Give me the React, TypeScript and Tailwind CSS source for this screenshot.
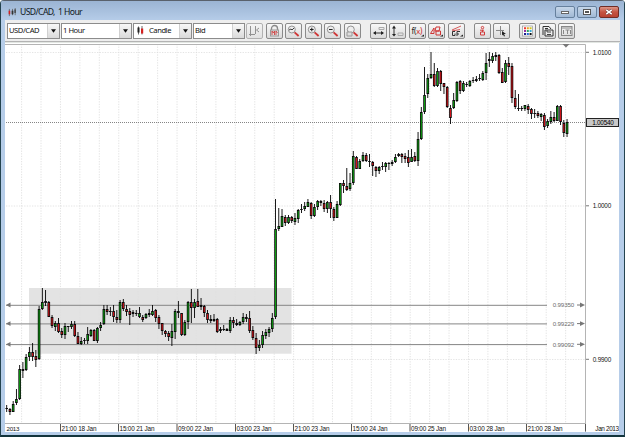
import type { ReactNode } from "react";

type Tone = "g" | "r" | "k";
type Candle = [high: number, low: number, top: number, bottom: number, tone: Tone];

const candles: Candle[] = [
  [405, 412, 408, 409, "k"], [408, 415, 409, 412, "r"], [401, 412, 404, 412, "g"], [389, 405, 399, 403, "g"],
  [365, 400, 369, 399, "g"], [362, 378, 369, 371, "k"], [354, 371, 357, 370, "g"], [347, 361, 352, 357, "g"],
  [343, 361, 352, 357, "r"], [350, 367, 356, 360, "r"], [306, 360, 309, 359, "g"], [288, 310, 302, 309, "g"],
  [290, 306, 301, 303, "r"], [301, 317, 302, 317, "r"], [315, 328, 317, 326, "r"], [321, 331, 323, 327, "g"],
  [318, 333, 323, 332, "r"], [328, 338, 331, 335, "r"], [323, 339, 326, 335, "g"], [326, 332, 326, 327, "g"],
  [321, 329, 324, 327, "g"], [321, 337, 324, 336, "r"], [332, 344, 336, 344, "r"], [337, 345, 341, 344, "g"],
  [338, 344, 340, 341, "k"], [327, 344, 334, 341, "g"], [329, 337, 330, 336, "g"], [329, 341, 330, 341, "r"],
  [327, 343, 328, 341, "g"], [322, 331, 325, 328, "g"], [305, 325, 309, 324, "g"], [305, 315, 309, 312, "r"],
  [307, 316, 311, 312, "k"], [305, 322, 311, 317, "r"], [310, 323, 317, 320, "r"], [300, 323, 302, 320, "g"],
  [299, 311, 302, 309, "r"], [305, 316, 309, 312, "r"], [308, 325, 311, 315, "r"], [310, 317, 312, 314, "g"],
  [310, 316, 313, 314, "k"], [307, 318, 313, 317, "g"], [315, 322, 317, 320, "r"], [313, 319, 314, 318, "g"],
  [309, 317, 313, 315, "g"], [305, 316, 311, 315, "g"], [309, 322, 310, 318, "r"], [315, 329, 317, 324, "r"],
  [323, 335, 323, 331, "r"], [330, 337, 331, 334, "r"], [331, 341, 333, 337, "r"], [324, 346, 331, 338, "g"],
  [309, 339, 311, 332, "g"], [301, 318, 311, 313, "r"], [313, 336, 313, 335, "r"], [320, 336, 322, 335, "g"],
  [301, 329, 302, 322, "g"], [289, 323, 302, 308, "r"], [299, 318, 302, 308, "g"], [289, 307, 301, 307, "r"],
  [298, 310, 305, 307, "r"], [305, 317, 306, 313, "r"], [310, 323, 313, 320, "r"], [315, 323, 319, 321, "g"],
  [314, 322, 319, 321, "g"], [318, 333, 319, 332, "r"], [327, 333, 329, 331, "g"], [325, 331, 329, 330, "k"],
  [328, 331, 329, 331, "r"], [317, 333, 320, 331, "g"], [317, 328, 320, 323, "r"], [319, 326, 323, 325, "r"],
  [321, 326, 322, 325, "g"], [313, 324, 317, 322, "g"], [314, 322, 317, 319, "r"], [311, 333, 318, 331, "r"],
  [326, 340, 330, 338, "r"], [333, 354, 338, 348, "r"], [340, 351, 345, 348, "g"], [331, 348, 335, 345, "g"],
  [329, 339, 332, 336, "g"], [327, 337, 329, 333, "g"], [313, 332, 318, 329, "g"], [199, 319, 229, 317, "g"],
  [208, 231, 226, 229, "g"], [209, 227, 216, 227, "g"], [215, 226, 217, 223, "r"], [215, 224, 217, 223, "g"],
  [216, 223, 217, 221, "r"], [213, 225, 218, 222, "g"], [209, 223, 210, 219, "g"], [204, 213, 209, 210, "g"],
  [202, 211, 206, 209, "g"], [199, 207, 202, 207, "g"], [202, 219, 203, 216, "r"], [204, 217, 207, 216, "g"],
  [200, 210, 201, 207, "g"], [200, 206, 201, 203, "r"], [200, 212, 203, 209, "r"], [201, 213, 202, 209, "g"],
  [195, 218, 202, 209, "r"], [207, 221, 209, 218, "r"], [201, 218, 204, 218, "g"], [183, 206, 183, 205, "g"],
  [180, 193, 183, 186, "r"], [168, 191, 186, 190, "r"], [173, 191, 183, 189, "g"], [151, 185, 156, 183, "g"],
  [156, 169, 157, 169, "r"], [159, 169, 161, 169, "g"], [152, 162, 155, 161, "g"], [153, 162, 155, 161, "r"],
  [154, 167, 161, 162, "r"], [161, 176, 162, 166, "r"], [166, 177, 167, 171, "r"], [166, 174, 167, 171, "g"],
  [162, 170, 166, 167, "k"], [162, 172, 163, 167, "g"], [162, 170, 163, 164, "k"], [160, 166, 162, 164, "g"],
  [154, 163, 157, 162, "g"], [153, 157, 154, 156, "g"], [153, 163, 154, 157, "r"], [153, 163, 156, 159, "r"],
  [150, 167, 157, 163, "r"], [149, 162, 157, 162, "g"], [152, 162, 156, 161, "r"], [132, 166, 139, 161, "g"],
  [107, 140, 112, 139, "g"], [67, 114, 95, 112, "g"], [74, 98, 78, 94, "g"], [52, 79, 74, 78, "g"],
  [63, 87, 74, 86, "r"], [68, 87, 71, 86, "g"], [70, 91, 71, 84, "r"], [83, 94, 83, 87, "r"],
  [86, 108, 87, 107, "r"], [105, 124, 108, 118, "r"], [93, 109, 100, 108, "g"], [81, 102, 82, 101, "g"],
  [80, 94, 81, 91, "r"], [81, 92, 83, 91, "g"], [82, 87, 84, 85, "k"], [80, 87, 81, 86, "g"],
  [77, 83, 80, 81, "g"], [76, 82, 79, 81, "g"], [74, 81, 78, 79, "k"], [71, 81, 73, 80, "g"],
  [53, 80, 63, 73, "g"], [52, 67, 59, 61, "g"], [53, 63, 56, 61, "g"], [52, 61, 55, 57, "g"],
  [54, 74, 55, 73, "r"], [68, 83, 72, 83, "r"], [60, 83, 63, 82, "g"], [57, 75, 63, 67, "r"],
  [63, 103, 66, 98, "r"], [90, 109, 98, 107, "r"], [94, 111, 108, 109, "k"], [106, 111, 108, 109, "k"],
  [105, 111, 105, 109, "g"], [104, 114, 106, 110, "r"], [108, 119, 109, 114, "r"], [109, 118, 113, 114, "k"],
  [111, 118, 113, 116, "r"], [113, 121, 114, 117, "g"], [113, 130, 115, 127, "r"], [119, 128, 121, 126, "g"],
  [111, 124, 117, 122, "g"], [112, 122, 117, 121, "r"], [105, 121, 106, 121, "g"], [105, 125, 106, 122, "r"],
  [120, 137, 123, 133, "r"], [119, 137, 122, 134, "g"],
];

const CHART_X = 5;
const CHART_Y = 43;
const FIRST_X = 6.7;
const STEP = 3.239;

const gridLines = Array.from({ length: 29 }, (_, i) => 21.6 + i * 19.43);

const timeLabels = [
  { x: 60.5, text: "21:00 18 Jan" },
  { x: 118.5, text: "15:00 21 Jan" },
  { x: 177, text: "09:00 22 Jan" },
  { x: 235.5, text: "03:00 23 Jan" },
  { x: 293.5, text: "21:00 23 Jan" },
  { x: 351.5, text: "15:00 24 Jan" },
  { x: 410, text: "09:00 25 Jan" },
  { x: 468.5, text: "03:00 28 Jan" },
  { x: 526.5, text: "21:00 28 Jan" },
];

const levels = [
  { y: 305, value: "0.99350" },
  { y: 323.6, value: "0.99229" },
  { y: 344.3, value: "0.99092" },
];

const prices = [
  { y: 52, value: "1.0100" },
  { y: 205.5, value: "1.0000" },
  { y: 359, value: "0.9900" },
];

function CandleIcon({ className }: { className?: string }) {
  return (
    <svg viewBox="0 0 9 10" className={className}>
      <path d="M1 1v8M4.5 1v7M7.5 0v8" stroke="#555" strokeWidth="0.8" />
      <rect x="0.2" y="3" width="1.8" height="4" fill="#d42020" />
      <rect x="3.5" y="3" width="2" height="4" fill="#333" />
      <rect x="6.6" y="1.5" width="1.6" height="4" fill="#444" />
    </svg>
  );
}

function CandleTypeIcon() {
  return (
    <svg viewBox="0 0 7 9" className="ml-[3px] mr-[4px] h-[9px] w-[7px]">
      <path d="M1.5 0.5v8M5 0v8.5" stroke="#444" strokeWidth="0.8" />
      <rect x="0.5" y="1.5" width="2" height="5" fill="#222" />
      <rect x="4" y="2.5" width="2.2" height="5" fill="#d42020" />
    </svg>
  );
}

function Select({ label, className, icon }: { label: string; className: string; icon?: ReactNode }) {
  return (
    <div className={`flex h-[16px] shrink-0 items-center border border-[#8c8c8c] bg-white ${className}`}>
      {icon}
      <span className="flex-1 whitespace-nowrap pl-[1px] text-[7.6px] leading-none tracking-[-0.45px] text-[#111]">{label}</span>
      <span className="flex h-full w-[12px] items-center justify-center border-l border-[#d0d0d0] bg-gradient-to-b from-[#f8f8f8] to-[#dadada]">
        <svg viewBox="0 0 6 4" className="h-[4px] w-[5px]">
          <path d="M0 0h6L3 4z" fill="#111" />
        </svg>
      </span>
    </div>
  );
}

function ToolButton({ children, className = "" }: { children: ReactNode; className?: string }) {
  return (
    <button
      className={`flex h-[16px] w-[17px] shrink-0 items-center justify-center rounded-[2px] border border-[#8a8a8a] bg-gradient-to-b from-[#f8f8f8] to-[#dadada] ${className}`}
    >
      <svg viewBox="0 0 15 14" className="h-[14px] w-[15px] shrink-0" fill="none" strokeWidth="1">
        {children}
      </svg>
    </button>
  );
}

function Lens({ children }: { children: ReactNode }) {
  return (
    <>
      <circle cx="5.8" cy="5.5" r="3.5" fill="#eee" stroke="#888" strokeWidth="0.9" />
      {children}
      <path d="M8.6 8.3l4 3.7" stroke="#cf3535" strokeWidth="1.8" />
    </>
  );
}

function TitleBar() {
  return (
    <div className="flex h-[20px] shrink-0 items-center border-t border-[#59616c] bg-gradient-to-b from-[#9bb4d3] to-[#b5cce8] pl-[7px] pt-[3px]">
      <CandleIcon className="h-[9px] w-[9px]" />
      <span className="ml-[3px] whitespace-nowrap text-[8.6px] leading-none tracking-[-0.6px] text-[#101822]">USD/CAD,&nbsp; 1 Hour</span>
      <div className="mb-[1px] ml-auto mr-[5px] flex gap-[2px]">
        <button className="flex h-[12px] w-[20px] items-center justify-center rounded-[2px] border border-[#66809d] bg-gradient-to-b from-[#c5d6e9] to-[#a1b9d5]">
          <span className="mt-[2px] h-[3px] w-[8px] border border-[#666] bg-white" />
        </button>
        <button className="flex h-[12px] w-[20px] items-center justify-center rounded-[2px] border border-[#66809d] bg-gradient-to-b from-[#c5d6e9] to-[#a1b9d5]">
          <span className="flex h-[6px] w-[8px] items-center justify-center border border-[#555] bg-white">
            <span className="h-[2px] w-[4px] bg-[#555]" />
          </span>
        </button>
        <button className="flex h-[12px] w-[20px] items-center justify-center rounded-[2px] border border-[#702c25] bg-gradient-to-b from-[#dc9588] via-[#c55341] to-[#b94333]">
          <svg viewBox="0 0 8 6" className="h-[6px] w-[8px]">
            <path d="M1.3.8l5.4 4.4M6.7.8L1.3 5.2" stroke="#5a3535" strokeWidth="2.4" />
            <path d="M1.3.8l5.4 4.4M6.7.8L1.3 5.2" stroke="#fff" strokeWidth="1.5" />
          </svg>
        </button>
      </div>
    </div>
  );
}

function Toolbar() {
  return (
    <div className="flex h-[22px] shrink-0 items-center border-b border-[#b3b3b3] bg-[#eeeeee] pl-[2px]">
      <Select label="USD/CAD" className="w-[53px]" />
      <Select label="1 Hour" className="ml-[1px] w-[71px]" />
      <Select label="Candle" className="ml-[1px] w-[59px]" icon={<CandleTypeIcon />} />
      <Select label="Bid" className="ml-[1px] w-[52px]" />
      <div className="ml-[1px] flex gap-[2.5px]">
        <ToolButton className="opacity-60">
          <path d="M3.5 2v10M2 10.5h6M8.5 2v8M12 4l-2.5 2L12 8" stroke="#555" />
        </ToolButton>
        <ToolButton>
          <path d="M4.5 6V4.5a3 3 0 0 1 6 0V6" stroke="#888" strokeWidth="1.3" />
          <rect x="3.5" y="6" width="8" height="6" fill="#ddd" stroke="#999" />
          <path d="M5 11V7l1.3 2L7.5 7v4M9 11V7l1.5 2" stroke="#c44" strokeWidth="0.9" />
        </ToolButton>
        <ToolButton>
          <Lens><path d="M3 6l2-1 1 1 2-2" stroke="#444" /></Lens>
        </ToolButton>
        <ToolButton>
          <Lens><path d="M4 5.5h3.6M5.8 3.7v3.6" stroke="#222" /></Lens>
        </ToolButton>
        <ToolButton>
          <Lens><path d="M4 5.5h3.6" stroke="#222" /></Lens>
        </ToolButton>
        <ToolButton>
          <Lens><path d="M2 8h5v4H2z" fill="#ddd" stroke="#999" /></Lens>
        </ToolButton>
      </div>
      <div className="ml-[9px] flex gap-[2.5px]">
        <ToolButton>
          <path d="M3 9h9" stroke="#333" />
          <path d="M2 9l3-2v4zM13 9l-3-2v4z" fill="#222" />
          <path d="M8 3.5h5v2H8z" stroke="#aaa" />
        </ToolButton>
        <ToolButton>
          <path d="M4 3v8" stroke="#333" />
          <path d="M4 1.5L6 4.5H2zM4 12.5L2 10h4z" fill="#222" />
          <path d="M8 9h5v2.5H8z" stroke="#aaa" />
        </ToolButton>
        <ToolButton>
          <text x="1.5" y="9.5" fontSize="8" fill="#222" textLength="5">f(</text>
          <text x="6.3" y="9.5" fontSize="7.5" fill="#cc2929">x</text>
          <text x="10" y="9.5" fontSize="8" fill="#cc2929">)</text>
          <path d="M11 12.5h3v-2z" fill="#222" />
        </ToolButton>
        <ToolButton>
          <path d="M1.5 9.5L5 4v5.5zM6 7l1-4h4l-1 4zM7 7h4.5v4H7z" stroke="#cf3434" />
          <path d="M11 12.5h3v-2z" fill="#222" />
        </ToolButton>
        <ToolButton>
          <path d="M3 6l9-4M3 7l8-1.5" stroke="#cf3434" strokeWidth="0.8" />
          <path d="M6 7.5H3.5v4H6V9.5M8 12V7.5h3M8 10h2" stroke="#333" />
          <path d="M11 12.5h3v-2z" fill="#222" />
        </ToolButton>
      </div>
      <div className="ml-[9px] flex gap-[2.5px]">
        <ToolButton>
          <circle cx="7.5" cy="3.6" r="1.2" stroke="#d23b3b" />
          <path d="M5 6.2h4M7.5 6v2M5.5 8h4v3h-4z" stroke="#d23b3b" />
        </ToolButton>
        <ToolButton>
          <path d="M6.5 2v9M2 6.5h8" stroke="#888" />
          <path d="M8 7l4 3H10l1 2-1 .4-1-2-1 1z" fill="#222" />
        </ToolButton>
      </div>
      <div className="ml-[9px] flex gap-[2.5px]">
        <ToolButton>
          <rect x="2.5" y="2" width="10" height="10" fill="#fff" stroke="#888" strokeWidth="0.6" />
          <path d="M4 4.2h2" stroke="#e33" strokeWidth="2" />
          <path d="M6.8 4.2h2" stroke="#e5a21d" strokeWidth="2" />
          <path d="M9.6 4.2h2" stroke="#cfc61d" strokeWidth="2" />
          <path d="M4 7.1h2" stroke="#922fa0" strokeWidth="2" />
          <path d="M6.8 7.1h2" stroke="#29a05c" strokeWidth="2" />
          <path d="M9.6 7.1h2" stroke="#35a9d9" strokeWidth="2" />
          <path d="M4 10h2" stroke="#202090" strokeWidth="2" />
          <path d="M6.8 10h2" stroke="#2468cf" strokeWidth="2" />
          <path d="M9.6 10h2" stroke="#111" strokeWidth="2" />
        </ToolButton>
        <ToolButton>
          <path d="M3 11V2.5h6L11 5M5 4.5h3" stroke="#333" />
          <path d="M5 6h8v6H5z" fill="#eee" stroke="#333" />
          <path d="M7 6v2h4M7 10.5h4" stroke="#444" />
        </ToolButton>
        <ToolButton>
          <rect x="2.5" y="2.5" width="10.5" height="9" stroke="#888" />
          <path d="M2.5 4h10.5M4.5 6v4M8.5 6v4M6.5 6h4M11.5 6v4" stroke="#888" />
        </ToolButton>
      </div>
    </div>
  );
}

function CandleShape({ index, candle }: { index: number; candle: Candle }) {
  const [high, low, top, bottom, tone] = candle;
  const x = FIRST_X + index * STEP;
  const fill = tone === "g" ? "#0c9c10" : "#cf1219";
  return (
    <g>
      <rect x={x - 0.45} y={high} width="0.9" height={low - high} fill="#000" />
      <rect x={x - 1.3} y={top} width="2.6" height={Math.max(1, bottom - top)} fill="#0a0a0a" />
      {tone !== "k" && bottom - top > 2 && (
        <rect x={x - 0.55} y={top + 1} width="1.1" height={bottom - top - 2} fill={fill} />
      )}
    </g>
  );
}

function Chart() {
  return (
    <svg
      viewBox={`${CHART_X} ${CHART_Y} 614 389`}
      className="block h-[389px] w-[614px] shrink-0 bg-white"
      fontFamily="Liberation Sans, Arial, sans-serif"
      fontSize="6.6"
    >
      <rect x="29" y="288" width="262.5" height="65.7" fill="#e3e3e3" />
      {gridLines.map((x) => (
        <line key={x} x1={x} y1="44" x2={x} y2="423" stroke="#e0e0e0" strokeWidth="0.9" strokeDasharray="1.3 1.3" />
      ))}
      {prices.map((p) => (
        <line key={p.value} x1="6" y1={p.y + 0.5} x2="585" y2={p.y + 0.5} stroke="#dddddd" strokeWidth="0.8" strokeDasharray="1.3 1.3" />
      ))}
      <line x1="6" y1="122.5" x2="585" y2="122.5" stroke="#858585" strokeDasharray="1 1" />

      {/* Support and resistance levels */}
      {levels.map((l) => (
        <g key={l.value}>
          <line x1="6" y1={l.y + 0.3} x2="547" y2={l.y + 0.3} stroke="#858585" />
          <path d={`M6 ${l.y}l4.5-2.4v4.8z`} fill="#777" />
          <line x1="577" y1={l.y} x2="581" y2={l.y} stroke="#777" />
          <path d={`M585 ${l.y}l-5-2.4v4.8z`} fill="#777" />
          <text x="552.7" y={l.y + 2.3} fill="#6c6c6c" fontSize="6.2" textLength="21.5">{l.value}</text>
        </g>
      ))}

      {candles.map((candle, i) => (
        <CandleShape key={i} index={i} candle={candle} />
      ))}

      {/* Axes */}
      <path d="M5 44.5h580.5V431.5M5 423.5h580.5" fill="none" stroke="#b4b4b4" />
      <path d="M562.5 44h7l-3.5 3.5z" fill="#777" />
      {prices.map((p) => (
        <g key={p.value}>
          <line x1="586" y1={p.y + 0.3} x2="589" y2={p.y + 0.3} stroke="#777" />
          <text x="592.7" y={p.y + 2.6} fill="#111" fontSize="6.4" textLength="18.6">{p.value}</text>
        </g>
      ))}
      <rect x="586.5" y="118.5" width="32" height="8" fill="#c9c9c9" stroke="#222" />
      <text x="592.2" y="124.9" fill="#000" fontSize="6.4" textLength="21.6">1.00540</text>
      <text x="6.5" y="431" fill="#111" fontSize="6.2" textLength="13">2013</text>
      {timeLabels.map((t) => (
        <g key={t.x}>
          <line x1={t.x} y1="424" x2={t.x} y2="431.5" stroke="#555" />
          <text x={t.x + 1} y="431" fill="#111" fontSize="6.4" textLength="35">{t.text}</text>
        </g>
      ))}
      <line x1="585.5" y1="424" x2="585.5" y2="431.5" stroke="#555" />
      <text x="595.3" y="431" fill="#111" fontSize="6.4" textLength="23.8">Jan 2013</text>
    </svg>
  );
}

export default function App() {
  return (
    <div className="flex h-[437px] w-[625px] flex-col overflow-hidden rounded-t-[4px] border-x border-b-2 border-x-[#24434f] border-b-[#12343c] bg-[#b6cde9] font-['Noto_Sans','Open_Sans',sans-serif]">
      <TitleBar />
      <div className="mx-[4px] mb-[3px] flex flex-col">
        <Toolbar />
        <div className="h-px bg-[#e2e6e2]" />
        <Chart />
      </div>
    </div>
  );
}
